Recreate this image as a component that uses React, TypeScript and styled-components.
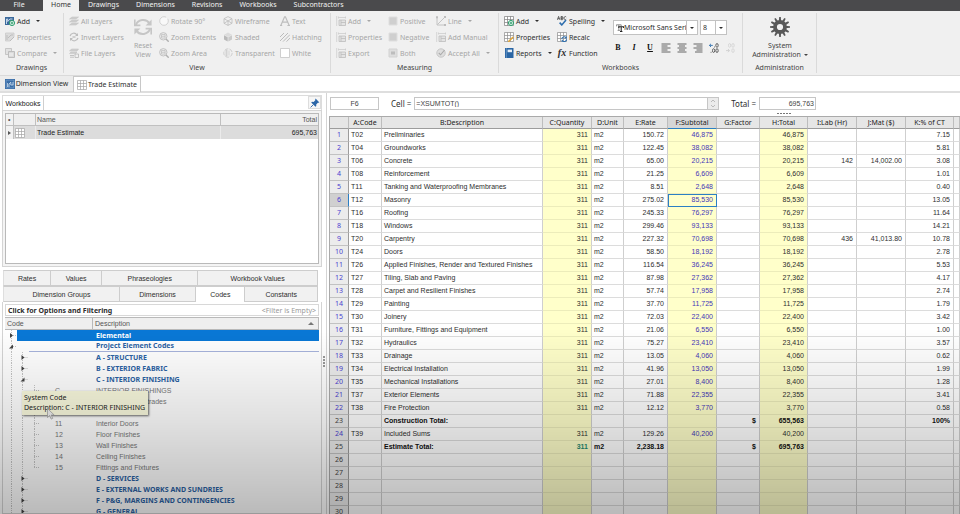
import React from "react";
import styled, { createGlobalStyle, css } from "styled-components";

const UI = `"Noto Sans", "Open Sans", sans-serif`;
const GRID = `"Liberation Sans", Arial, sans-serif`;

const Global = createGlobalStyle`
  *, *::before, *::after { box-sizing: border-box; }
  html, body, #root { height: 100%; }
  body { margin: 0; overflow: hidden; background: #fff; font: 7px/9px ${UI}; color: #2e2e2e; }
  button, input, select { font: inherit; color: inherit; margin: 0; padding: 0; border: 0; background: none; border-radius: 0; }
  table { border-collapse: separate; border-spacing: 0; }
`;

/* ---------- icons ---------- */

const G = "#bdbdbd";
const BLUE = "#2f6fae";
const GREEN = "#2f9e6e";

const grid = (c: string) => (
  <path d="M.5.5h9v9h-9zM.5 3.5h9M.5 6.5h9M3.5.5v9M6.5.5v9" fill="#fff" stroke={c} strokeWidth=".7" />
);

const drawings: Record<string, React.ReactNode> = {
  addDrawing: (
    <>
      <path d="M0 1h9v4H5v4H0z" fill="#3c6a9c" />
      <path d="M1.5 8V3h1.2v2.5L5 3h2.5" fill="none" stroke="#cfe0f0" strokeWidth=".9" />
      <circle cx="7" cy="7" r="2.6" fill="#eef7f2" stroke={GREEN} strokeWidth="1" />
      <path d="M7 5.6v2.8M5.6 7h2.8" stroke={GREEN} strokeWidth="1" />
    </>
  ),
  drawing: (
    <>
      <path d="M.5 1h8.5v4L5 9H.5z" fill="#dcdcdc" stroke="#cacaca" strokeWidth=".8" />
      <path d="M2 8V3M3 6l3-3h2M5 9l4-4" fill="none" stroke={G} />
    </>
  ),
  compare: (
    <>
      <path d="M.5.5h6v6h-6z" fill="#e2e2e2" stroke={G} strokeWidth=".8" />
      <path d="M3.5 3.5h6v6h-6z" fill="#dadada" stroke={G} />
      <path d="M5 8V5M7 8V5" stroke="#f4f4f4" />
    </>
  ),
  layers: (
    <path d="M3 1h6.5L7 3H.5zM3 4h6.5L7 6H.5zM3 7h6.5L7 9H.5z" fill="#cfcfcf" stroke={G} strokeWidth=".5" />
  ),
  invert: (
    <>
      <path d="M1 4c1-3 5-4 7-1M9 6c-1 3-5 4-7 1" fill="none" stroke={G} strokeWidth="1.2" />
      <path d="M9 1v3H6zM1 9V6h3z" fill={G} />
      <path d="M3.5 4h3v2h-3z" fill="#cfcfcf" />
    </>
  ),
  fileLayers: (
    <>
      <path d="M2.5 1h7L8 3H.5zM2 4h6L6.5 5.6H.5z" fill="#cfcfcf" stroke={G} strokeWidth=".5" />
      <path d="M1 7.5h4M1 9.2h4M6 6h3.5v3.5H6z" fill="none" stroke={G} strokeWidth=".9" />
    </>
  ),
  reset: (
    <>
      <path d="M1.4 4.2A3.8 3.6 0 0 1 8.3 3.2M8.6 5.8A3.8 3.6 0 0 1 1.7 6.8" fill="none" stroke="#c6c6c6" strokeWidth="1" />
      <path d="M9.3 1.2v3H6.3zM.7 8.8v-3h3z" fill="#c6c6c6" />
      <path d="M.9 1.2v3h2.8M9.1 8.8v-3H6.3" fill="none" stroke="#c6c6c6" strokeWidth=".8" />
    </>
  ),
  rotate: <circle cx="5" cy="5" r="4.3" fill="#f8f8f8" stroke="#c9c9c9" strokeWidth=".8" strokeDasharray="22 2" />,
  zoom: (
    <>
      <circle cx="4.3" cy="4.3" r="3.7" fill="#ececec" stroke={G} strokeWidth=".9" />
      <path d="M7 7l2.7 2.7" stroke="#b0b0b0" strokeWidth="1.4" />
      <path d="M2.5 2.5h3.6v3.6H2.5zM2.5 4.3h3.6" fill="none" stroke={G} strokeWidth=".7" />
    </>
  ),
  wire: (
    <path d="M5 .6l4 2.1v4.6L5 9.4 1 7.3V2.7zM1 2.7l4 2.2 4-2.2M5 4.9v4.5M1 7.3l4-2.4 4 2.4" fill="none" stroke={G} strokeWidth=".8" />
  ),
  shaded: (
    <>
      <path d="M5 .6l4 2.1L5 4.9 1 2.7z" fill="#dcdcdc" />
      <path d="M1 3.2l3.7 2v4.3L1 7.4z" fill="#b9b9b9" />
      <path d="M9 3.2l-3.7 2v4.3L9 7.4z" fill="#cacaca" />
    </>
  ),
  transparent: (
    <>
      <circle cx="5" cy="5" r="4.2" fill="none" stroke="#c9c9c9" strokeWidth=".9" strokeDasharray="4 1.2" />
      <path d="M3 2v6h1V2zM6 2.5v5" stroke="#cdcdcd" fill="#ddd" strokeWidth=".8" />
    </>
  ),
  letterA: <path d="M.8 9.5L4.6.8h.8l3.8 8.7M2.4 6.2h5.2M0 9.5h2.2M7.4 9.5H10" fill="none" stroke={G} strokeWidth="1.2" />,
  hatch: <path d="M0 5l4-4M0 9l8-8M3 9.6l7-7M6.5 9.6L10 6" stroke="#b6b6b6" strokeWidth=".9" />,
  white: <path d="M.5.5h9v9h-9z" fill="#fff" stroke="#c4c4c4" strokeWidth=".8" />,
  measure: (
    <>
      <path d="M.7 0v10M2.5 1.5H10M2.5.5v2M9.5.5v2" fill="none" stroke="#cdcdcd" strokeWidth=".8" />
      <path d="M3 4h6.5v5.5H3zM5 4v5.5M5 6.5h4.5" fill="#e4e4e4" stroke={G} strokeWidth=".8" />
    </>
  ),
  solid: <path d="M1 1h8v8H1z" fill="#cfcfcf" stroke="#dedede" />,
  both: (
    <>
      <path d="M1 1h8v8H1z" fill="#dedede" stroke="#d2d2d2" />
      <path d="M3 3.5h4v3H3z" fill={G} />
    </>
  ),
  line: (
    <>
      <path d="M1 1v8h8M1.5 8.5l7-7" fill="none" stroke={G} strokeWidth=".9" />
      <path d="M0 .2h2v2H0zM8 0h2v2H8zM8 8h2v2H8z" fill={G} />
    </>
  ),
  accept: (
    <>
      <circle cx="5" cy="5" r="4.2" fill="#dedede" stroke="#c6c6c6" />
      <path d="M2.8 5l1.8 1.8L8.6 2" fill="none" stroke="#aaa" strokeWidth="1.1" />
    </>
  ),
  addSheet: (
    <>
      {grid("#7d7d7d")}
      <circle cx="7" cy="7" r="2.6" fill="#eef7f2" stroke={GREEN} strokeWidth="1" />
      <path d="M7 5.6v2.8M5.6 7h2.8" stroke={GREEN} />
    </>
  ),
  propSheet: (
    <>
      {grid("#8c8c8c")}
      <path d="M4 9l4.6-4.6 1.2 1.2L5.2 10H4z" fill="#e0a63a" />
    </>
  ),
  recalc: (
    <>
      {grid("#8c8c8c")}
      <path d="M4.8 7a2.4 2.4 0 0 1 4.2-1.4M9.6 7.4a2.4 2.4 0 0 1-4.2 1.4" fill="none" stroke={BLUE} strokeWidth="1.1" />
      <path d="M9.8 4v2.4H7.4zM4.6 10V7.8h2.2z" fill={BLUE} />
    </>
  ),
  report: (
    <>
      <path d="M1 0h8.5v10H1z" fill="#2a66a5" />
      <path d="M3.6 1.6h4.4v2.6H3.6z" fill="#e6eff8" />
      <path d="M2.4 0v10" stroke="#7ea6ce" strokeWidth=".6" />
    </>
  ),
  spelling: (
    <>
      <path d="M.4 3.8L1.6.4l1.2 3.4M.9 2.7h1.5M4 .5v3.2h1.2a.8.8 0 0 0 0-1.6H4h1.1a.8.8 0 0 0 0-1.6zM9.2 1a1.3 1.6 0 1 0 0 2.2" fill="none" stroke="#333" strokeWidth=".7" />
      <path d="M2.6 6.6l2.2 2.3L9 4" fill="none" stroke={BLUE} strokeWidth="1.6" />
    </>
  ),
  pin: (
    <>
      <path d="M5.6.6l3.8 3.8-1 .4-.5-.1-1.7 1.7.1 1.7-.8.7L1.2 4.5l.8-.7 1.6.1 1.7-1.7-.1-.6z" fill="#2b66a8" />
      <path d="M3.4 6.6L.6 9.4" stroke="#2b66a8" strokeWidth=".9" />
    </>
  ),
  dimView: (
    <>
      <path d="M0 0h10v10H0z" fill="#3a6ea8" />
      <path d="M1.2 1.2h7.6v7.6H1.2z" fill="none" stroke="#8fb0d4" strokeWidth=".5" />
      <path d="M2.6 8V4M4 8V5l1.8-1.8V6H8V3" fill="none" stroke="#d5e4f3" strokeWidth=".8" />
    </>
  ),
  sheet: grid("#a4a4a4"),
  tt: (
    <>
      <path d="M.5 3V1h6v2M3.5 1v7M2 8h3" fill="none" stroke="#777" strokeWidth="1" />
      <path d="M3.5 5V3.5h6V5M6.5 3.5v6M5 9.5h3" fill="none" stroke="#222" strokeWidth="1.3" />
    </>
  ),
  alignLeft: <path d="M.5 1h9M.5 3h6M.5 5h9M.5 7h6M.5 9h9" stroke="#555" strokeWidth=".9" />,
  alignCenter: <path d="M.5 1h9M2 3h6M.5 5h9M2 7h6M.5 9h9" stroke="#555" strokeWidth=".9" />,
  alignRight: <path d="M.5 1h9M3.5 3h6M.5 5h9M3.5 7h6M2 9h7.5" stroke="#555" strokeWidth=".9" />,
  decInc: (
    <>
      <path d="M.4 2.4h3.4M2 .8L.4 2.4 2 4" fill="none" stroke={BLUE} strokeWidth=".9" />
      <path d="M5 4h.8" stroke="#444" strokeWidth=".9" />
      <g fill="none" stroke="#444" strokeWidth=".8">
        <ellipse cx="8" cy="2.4" rx="1.2" ry="1.9" />
        <ellipse cx="4.6" cy="7.6" rx="1.1" ry="1.9" />
        <ellipse cx="8" cy="7.6" rx="1.2" ry="1.9" />
        <path d="M1.6 9.3h.9" />
      </g>
    </>
  ),
  decDec: (
    <>
      <path d="M1 7.6h3.4M3 6l1.4 1.6L3 9.2" fill="none" stroke="#cfcfcf" strokeWidth=".9" />
      <g fill="none" stroke="#d2d2d2" strokeWidth=".8">
        <ellipse cx="4.6" cy="2.4" rx="1.1" ry="1.9" />
        <ellipse cx="8" cy="2.4" rx="1.2" ry="1.9" />
        <ellipse cx="8" cy="7.6" rx="1.2" ry="1.9" />
      </g>
    </>
  ),
  gear: (
    <>
      {Array.from({ length: 12 }, (_, i) => (
        <path key={i} d="M4.4 2.4L4.6 0h.8l.2 2.4z" fill="#585858" transform={`rotate(${i * 30} 5 5)`} />
      ))}
      <circle cx="5" cy="5" r="2.5" fill="#f0f0f0" stroke="#585858" strokeWidth="1.9" />
    </>
  ),
};

const Svg = styled.svg<{ $size?: number }>`
  width: ${(p) => p.$size ?? 10}px;
  height: ${(p) => p.$size ?? 10}px;
  flex: none;
  display: block;
`;
const Icon = ({ name, size }: { name: string; size?: number }) => (
  <Svg $size={size} viewBox="0 0 10 10" aria-hidden="true">{drawings[name]}</Svg>
);

const Caret = styled.i`
  flex: none;
  border: 2px solid transparent;
  border-top-color: currentColor;
  border-bottom: 0;
`;

/* ---------- shell ---------- */

const Page = styled.div`
  height: 100vh;
  display: flex;
  flex-direction: column;
  overflow: hidden;
`;

const Shade = styled.div`
  position: fixed;
  inset: auto 0 0 0;
  height: 36vh;
  pointer-events: none;
  background: linear-gradient(rgba(0, 0, 0, 0), rgba(0, 0, 0, 0.12) 50%, rgba(0, 0, 0, 0.27));
`;

const Menu = styled.nav`
  flex: none;
  height: 11px;
  display: flex;
  gap: 1px;
  background: #4a4a4c;
`;
const MenuItem = styled.button<{ $active?: boolean; $file?: boolean }>`
  padding: 0 8px 2px;
  line-height: 9px;
  color: #f2f2f2;
  ${(p) => p.$file && css`width: 42px; padding-right: 12px;`}
  ${(p) => p.$active && css`background: #f0f0f0; color: #333;`}
`;

/* ---------- ribbon ---------- */

const Ribbon = styled.div`
  flex: none;
  height: 65px;
  display: flex;
  background: #f0f0f0;
  border-bottom: 1px solid #dadada;
  padding: 2px 0;
`;
const Group = styled.section<{ $w: number }>`
  width: ${(p) => p.$w}px;
  flex: none;
  display: flex;
  flex-direction: column;
  border-right: 1px solid #dadada;
`;
const GroupBody = styled.div`
  flex: 1;
  display: flex;
  padding-left: 5px;
`;
const GroupLabel = styled.h2`
  margin: 0;
  font-size: 7px;
  font-weight: 400;
  line-height: 10px;
  text-align: center;
  color: #444;
`;
const Col = styled.div<{ $w: number }>`
  width: ${(p) => p.$w}px;
  flex: none;
  display: flex;
  flex-direction: column;
`;
const Tool = styled.button<{ $off?: boolean }>`
  height: 16px;
  display: flex;
  align-items: center;
  gap: 2px;
  white-space: nowrap;
  color: ${(p) => (p.$off ? "#a6a6a6" : "#2e2e2e")};
  ${Caret} { margin-left: 4px; }
`;
const BigTool = styled.button<{ $off?: boolean; $w: number }>`
  width: ${(p) => p.$w}px;
  flex: none;
  display: flex;
  flex-direction: column;
  align-items: center;
  padding-top: 4px;
  white-space: nowrap;
  color: ${(p) => (p.$off ? "#a6a6a6" : "#444")};
  ${Svg} { margin-bottom: 4px; }
`;
const Inline = styled.span`
  display: flex;
  align-items: center;
  gap: 3px;
`;
const Fx = styled.i`
  width: 10px;
  font: italic bold 10px/10px "Liberation Serif", serif;
`;
const FontPane = styled.div`
  display: flex;
  flex-direction: column;
  padding-top: 7px;
  gap: 7px;
`;
const Line = styled.div`
  display: flex;
  align-items: center;
  gap: 2px;
`;
const Picker = styled.label<{ $w: number }>`
  width: ${(p) => p.$w}px;
  height: 15px;
  display: flex;
  align-items: center;
  background: #fff;
  border: 1px solid #c2c2c2;
  padding-left: 2px;
  select {
    flex: 1;
    min-width: 0;
    height: 13px;
    appearance: none;
    outline: 0;
  }
`;
const Drop = styled.span`
  width: 11px;
  align-self: stretch;
  display: flex;
  align-items: center;
  justify-content: center;
  border-left: 1px solid #c2c2c2;
`;
const Format = styled.button`
  width: 16px;
  height: 12px;
  display: flex;
  align-items: center;
  justify-content: center;
  font: bold 8px/12px "Liberation Serif", serif;
  color: #111;
  &.i { font-style: italic; }
  &.u { text-decoration: underline; }
`;
const FormatLine = styled.div`
  display: flex;
  margin-left: -3px;
`;

type ToolDef = [icon: string, label: string, drop?: boolean];
const Tools = ({ w, items, off }: { w: number; items: ToolDef[]; off?: boolean }) => (
  <Col $w={w}>
    {items.map(([icon, label, drop]) => (
      <Tool key={label} $off={off || icon === "drawing" || icon === "compare"}>
        {icon === "fx" ? <Fx>fx</Fx> : <Icon name={icon} />}
        {label}
        {drop && <Caret />}
      </Tool>
    ))}
  </Col>
);

const RibbonBar = () => (
  <Ribbon>
    <Group $w={64}>
      <GroupBody>
        <Tools w={58} items={[["addDrawing", "Add", true], ["drawing", "Properties"], ["compare", "Compare", true]]} />
      </GroupBody>
      <GroupLabel>Drawings</GroupLabel>
    </Group>
    <Group $w={267}>
      <GroupBody>
        <Tools off w={58} items={[["layers", "All Layers"], ["invert", "Invert Layers"], ["fileLayers", "File Layers"]]} />
        <BigTool $off $w={32}><Icon name="reset" size={20} /><span>Reset</span><span>View</span></BigTool>
        <Tools off w={64} items={[["rotate", "Rotate 90°"], ["zoom", "Zoom Extents"], ["zoom", "Zoom Area"]]} />
        <Tools off w={57} items={[["wire", "Wireframe"], ["shaded", "Shaded"], ["transparent", "Transparent"]]} />
        <Tools off w={48} items={[["letterA", "Text"], ["hatch", "Hatching"], ["white", "White"]]} />
      </GroupBody>
      <GroupLabel>View</GroupLabel>
    </Group>
    <Group $w={168}>
      <GroupBody>
        <Tools off w={52} items={[["measure", "Add", true], ["measure", "Properties"], ["measure", "Export"]]} />
        <Tools off w={48} items={[["solid", "Positive"], ["solid", "Negative"], ["both", "Both"]]} />
        <Tools off w={60} items={[["line", "Line", true], ["measure", "Add Manual"], ["accept", "Accept All", true]]} />
      </GroupBody>
      <GroupLabel>Measuring</GroupLabel>
    </Group>
    <Group $w={244}>
      <GroupBody>
        <Tools w={53} items={[["addSheet", "Add", true], ["propSheet", "Properties"], ["report", "Reports", true]]} />
        <Tools w={56} items={[["spelling", "Spelling", true], ["recalc", "Recalc"], ["fx", "Function"]]} />
        <FontPane>
          <Line>
            <Picker $w={85}>
              <Icon name="tt" size={8} />
              <select aria-label="Font"><option>Microsoft Sans Serif</option></select>
              <Drop><Caret /></Drop>
            </Picker>
            <Picker $w={27}>
              <select aria-label="Font size"><option>8</option></select>
              <Drop><Caret /></Drop>
            </Picker>
          </Line>
          <FormatLine>
            <Format>B</Format>
            <Format className="i">I</Format>
            <Format className="u">U</Format>
            <Format aria-label="Align left"><Icon name="alignLeft" /></Format>
            <Format aria-label="Align center"><Icon name="alignCenter" /></Format>
            <Format aria-label="Align right"><Icon name="alignRight" /></Format>
            <Format aria-label="Increase decimals"><Icon name="decInc" /></Format>
            <Format aria-label="Decrease decimals"><Icon name="decDec" /></Format>
          </FormatLine>
        </FontPane>
      </GroupBody>
      <GroupLabel>Workbooks</GroupLabel>
    </Group>
    <Group $w={74}>
      <GroupBody>
        <BigTool $w={64}>
          <Icon name="gear" size={20} />
          <span>System</span>
          <Inline>Administration <Caret /></Inline>
        </BigTool>
      </GroupBody>
      <GroupLabel>Administration</GroupLabel>
    </Group>
  </Ribbon>
);

/* ---------- document tabs ---------- */

const DocTabs = styled.div`
  flex: none;
  height: 17px;
  display: flex;
  align-items: flex-end;
  border-bottom: 2px solid #dedede;
`;
const DocTab = styled.button<{ $active?: boolean; $w: number }>`
  width: ${(p) => p.$w}px;
  height: 15px;
  display: flex;
  align-items: center;
  justify-content: center;
  gap: 1px;
  white-space: nowrap;
  background: #ececec;
  ${(p) => p.$active && css`
    height: 16px;
    background: #fff;
    border: 1px solid #c8c8c8;
    border-bottom: 0;
    margin-bottom: -1px;
  `}
`;

/* ---------- left side ---------- */

const Main = styled.main`
  flex: 1;
  min-height: 0;
  display: flex;
`;
const Left = styled.aside`
  width: 322px;
  flex: none;
  display: flex;
  flex-direction: column;
  padding: 2px 0 0 2px;
  font: 7px/9px ${GRID};
`;
const PaneHead = styled.div`
  height: 15px;
  flex: none;
  display: flex;
  justify-content: space-between;
  border: 1px solid #dcdcdc;
  border-bottom: 0;
`;
const PaneTab = styled.h1`
  margin: 0;
  width: 41px;
  font: 7px/15px ${GRID};
  text-align: center;
  border-right: 1px solid #cfcfcf;
  color: #222;
`;
const Pin = styled.button`
  width: 13px;
  height: 13px;
  display: flex;
  align-items: center;
  justify-content: center;
  background: #f6f6f6;
  border: 1px solid #ddd;
`;
const PaneBox = styled.div`
  height: 157px;
  flex: none;
  padding: 2px;
  border: 1px solid #d4d4d4;
  background: #f4f4f4;
  margin-bottom: 3px;
`;
const BookFrame = styled.div`
  height: 100%;
  border: 1px solid #b9b9b9;
  background: #fff;
`;
const BookTable = styled.table`
  width: 100%;
  table-layout: fixed;
  th, td { padding: 0 1px; height: 12px; text-align: left; font-weight: 400; border-right: 1px solid #c0c0c0; }
  th { background: #efefef; border-bottom: 1px solid #c0c0c0; color: #555; }
  td { height: 13px; background: #dcdcdc; border-right-color: #ebebeb; color: #222; }
  tr > :last-child { text-align: right; border-right: 0; }
  tr > :first-child { padding: 0 2px; border-right: 1px solid #c0c0c0; background: #f2f2f2; }
`;
const ArrowRight = styled.i`
  display: block;
  width: 0;
  border: 2px solid transparent;
  border-left: 3px solid #555;
  border-right: 0;
`;
const TabRow = styled.div`
  flex: none;
  display: flex;
  margin: 0 4px 0 1px;
`;
const Tab = styled.button<{ $active?: boolean; $w: number }>`
  flex: ${(p) => p.$w} 1 0;
  height: 16px;
  background: ${(p) => (p.$active ? "#fff" : "#f1f1f1")};
  border: 1px solid #cdcdcd;
  border-left: 0;
  border-bottom: ${(p) => (p.$active ? "0" : "1px solid #cdcdcd")};
  white-space: nowrap;
  &:first-child { border-left: 1px solid #dedede; }
`;
const CodePane = styled.div`
  flex: 1;
  min-height: 0;
  overflow: hidden;
  border: 1px solid #d4d4d4;
  border-top: 0;
  padding: 2px 2px 0;
`;
const Filter = styled.button`
  width: 100%;
  height: 12px;
  margin-bottom: 1px;
  display: flex;
  align-items: center;
  justify-content: space-between;
  padding: 0 2px;
  border: 1px solid #d8d8d8;
  font: bold 7px/9px ${UI};
  span { font-weight: 400; color: #999; }
`;
const TreeTable = styled.table`
  width: 100%;
  table-layout: fixed;
  th {
    height: 13px;
    padding: 0 2px;
    text-align: left;
    font-weight: 400;
    color: #555;
    background: #efefef;
    border: 1px solid #b9b9b9;
    border-left-width: 0;
  }
  th > div { display: flex; justify-content: space-between; align-items: center; }
  td { height: 11px; padding: 0; line-height: 11px; white-space: nowrap; color: #777; }
  td + td { padding-left: 3px; }
`;
const SortUp = styled.i`
  border: 3px solid transparent;
  border-bottom-color: #777;
  border-top: 0;
  margin-right: 2px;
`;
const CodeCell = styled.div`
  display: flex;
  align-items: center;
  height: 11px;
`;
const Branches = styled.svg<{ $w: number }>`
  width: ${(p) => p.$w}px;
  height: 11px;
  flex: none;
`;
const Fill = styled.span<{ $kind?: "selected" | "group" }>`
  flex: 1;
  height: 11px;
  ${(p) => p.$kind === "selected" && css`background: #0a78d6;`}
  ${(p) => p.$kind === "group" && css`margin-left: 12px; border-bottom: 1px solid #a8b4dc;`}
`;
const TreeRow = styled.tr<{ $kind?: "selected" | "group"; $bold?: boolean }>`
  ${(p) => p.$bold && css`td { font-family: ${UI}; font-weight: 700; color: #2b62a4; }`}
  ${(p) => p.$kind === "selected" && css`td + td { background: #0a78d6; color: #fff; }`}
  ${(p) => p.$kind === "group" && css`td + td { border-bottom: 1px solid #a8b4dc; line-height: 10px; }`}
`;

type Node = { level: 0 | 1 | 2; code?: string; text: string; open?: boolean; last?: boolean; kind?: "selected" | "group" };
const nodes: Node[] = [
  { level: 0, text: "Elemental", kind: "selected" },
  { level: 0, text: "Project Element Codes", open: true, kind: "group" },
  { level: 1, text: "A - STRUCTURE" },
  { level: 1, text: "B - EXTERIOR FABRIC" },
  { level: 1, text: "C - INTERIOR FINISHING", open: true },
  { level: 2, code: "C", text: "INTERIOR FINISHINGS" },
  { level: 2, code: "09", text: "Stairs and Balustrades" },
  { level: 2, code: "10", text: "Interior Walls" },
  { level: 2, code: "11", text: "Interior Doors" },
  { level: 2, code: "12", text: "Floor Finishes" },
  { level: 2, code: "13", text: "Wall Finishes" },
  { level: 2, code: "14", text: "Ceiling Finishes" },
  { level: 2, code: "15", text: "Fittings and Fixtures", last: true },
  { level: 1, text: "D - SERVICES" },
  { level: 1, text: "E - EXTERNAL WORKS AND SUNDRIES" },
  { level: 1, text: "F - P&G, MARGINS AND CONTINGENCIES" },
  { level: 1, text: "G - GENERAL" },
];

const Guide = ({ node }: { node: Node }) => {
  const x = 6 + node.level * 11.5;
  const w = [12, 30, 50][node.level];
  return (
    <Branches $w={w} viewBox={`0 0 ${w} 11`} aria-hidden="true">
      <g fill="none" stroke="#c4c4c4" strokeDasharray="1 1">
        <path d="M6.5 0v11" />
        {node.level > 0 && <path d="M17.5 0v11" />}
        {node.level === 2 && <path d={node.last ? "M29.5 0v5" : "M29.5 0v11"} />}
        <path d={`M${x} 5.5h6`} />
      </g>
      {node.level < 2 &&
        (node.open ? (
          <path d={`M${x + 2} 3.5v4h-4z`} fill="#444" />
        ) : (
          <path d={`M${x - 1} 3l3 2.5-3 2.5z`} fill="#444" />
        ))}
    </Branches>
  );
};

const TreeWrap = styled.div`
  position: relative;
`;
const Tip = styled.div`
  position: absolute;
  left: 17px;
  top: 74px;
  height: 24px;
  padding: 2px 3px 0 2px;
  font: 7px/10px ${UI};
  white-space: nowrap;
  color: #222;
  background: #fafade;
  box-shadow: 1px 1px 2px rgba(0, 0, 0, 0.6);
`;
const Pointer = styled.svg`
  position: absolute;
  left: 25px;
  top: 17px;
  width: 8px;
  height: 12px;
`;

const LeftSide = () => (
  <Left>
    <PaneHead>
      <PaneTab>Workbooks</PaneTab>
      <Pin aria-label="Pin"><Icon name="pin" /></Pin>
    </PaneHead>
    <PaneBox>
      <BookFrame>
        <BookTable>
          <colgroup><col width={8} /><col width={22} /><col /><col width={97} /></colgroup>
          <thead><tr><th>•</th><th /><th>Name</th><th>Total</th></tr></thead>
          <tbody>
            <tr><td><ArrowRight /></td><td><Icon name="sheet" /></td><td>Trade Estimate</td><td>695,763</td></tr>
          </tbody>
        </BookTable>
      </BookFrame>
    </PaneBox>
    <TabRow>
      <Tab $w={47}>Rates</Tab><Tab $w={51}>Values</Tab><Tab $w={97}>Phraseologies</Tab><Tab $w={121}>Workbook Values</Tab>
    </TabRow>
    <TabRow>
      <Tab $w={117}>Dimension Groups</Tab><Tab $w={77}>Dimensions</Tab><Tab $w={49} $active>Codes</Tab><Tab $w={73}>Constants</Tab>
    </TabRow>
    <CodePane>
      <Filter>Click for Options and Filtering<span>&lt;Filter is Empty&gt;</span></Filter>
      <TreeWrap>
        <TreeTable>
          <colgroup><col width={88} /><col /></colgroup>
          <thead><tr><th>Code</th><th><div>Description<SortUp /></div></th></tr></thead>
          <tbody>
            {nodes.map((n) => (
              <TreeRow key={n.text} $kind={n.kind} $bold={n.level < 2}>
                <td><CodeCell><Guide node={n} />{n.code ?? <Fill $kind={n.kind} />}</CodeCell></td>
                <td>{n.text}</td>
              </TreeRow>
            ))}
          </tbody>
        </TreeTable>
        <Tip role="tooltip">
          System Code<br />Description: C - INTERIOR FINISHING
          <Pointer viewBox="0 0 8 12" aria-hidden="true">
            <path d="M.5.5v9l2.2-2 1.5 3.6 1.5-.7-1.5-3.4h3z" fill="#eee" stroke="#999" strokeWidth=".7" />
          </Pointer>
        </Tip>
      </TreeWrap>
    </CodePane>
  </Left>
);

/* ---------- right side ---------- */

const Splitter = styled.div`
  width: 5px;
  flex: none;
  display: flex;
  flex-direction: column;
  align-items: center;
  justify-content: center;
  gap: 1px;
  padding-top: 116px;
  border-right: 1px solid #d4d4d4;
  i { width: 2px; height: 2px; background: #999; }
`;
const Right = styled.section`
  flex: 1;
  min-width: 0;
  display: flex;
  flex-direction: column;
  padding: 1px 0 0 2px;
  overflow: hidden;
`;
const CellBar = styled.div`
  flex: none;
  height: 19px;
  display: flex;
  align-items: center;
  padding: 0 144px 0 1px;
  label { margin: 0 3px 0 12px; white-space: nowrap; font-size: 8px; }
`;
const Box = styled.input<{ $w?: number; $align?: string }>`
  ${(p) => (p.$w ? css`width: ${p.$w}px; flex: none;` : css`flex: 1; min-width: 0;`)}
  height: 13px;
  border: 1px solid #c6c6c6;
  padding: 0 1px;
  background: #fff;
  color: #444;
  font: 7px/11px ${GRID};
  text-align: ${(p) => p.$align ?? "left"};
`;
const Spin = styled.button`
  width: 11px;
  height: 13px;
  flex: none;
  display: flex;
  background: #ececec;
  border: 1px solid #c6c6c6;
  border-left: 0;
  svg { width: 10px; height: 11px; }
`;
const Dots = styled.div`
  flex: none;
  height: 3px;
  display: flex;
  gap: 1px;
  padding: 0 0 0 448px;
  i { width: 2px; height: 1px; background: #777; }
`;
const Sheet = styled.table`
  width: 100%;
  flex: none;
  table-layout: fixed;
  border-top: 1px solid #aaa;
  border-left: 1px solid #aaa;
  font: 7px/12px ${GRID};
  th, td {
    height: 13px;
    padding: 0 3px 0 2px;
    border-right: 1px solid #cfcfcf;
    border-bottom: 1px solid #dcdcdc;
    white-space: nowrap;
    overflow: hidden;
    text-align: right;
  }
  thead th {
    height: 12px;
    background: #e6e6e6;
    border-right-color: #bdbdbd;
    border-bottom-color: #9c9c9c;
    padding: 0;
    text-align: center;
    font: 7px/11px ${UI};
    color: #222;
  }
  thead th.on { background: #d6d6d6; border-bottom-color: #2b7fc4; }
`;
const RowHead = styled.th<{ $blue?: boolean; $on?: boolean }>`
  && {
    text-align: center;
    padding: 0;
    font: 7px/12px ${UI};
    color: ${(p) => (p.$blue ? "#4a3fd0" : "#444")};
    background: ${(p) => (p.$on ? "#d0d0d0" : "#ececec")};
    border-right-color: ${(p) => (p.$on ? "#2b7fc4" : "#9c9c9c")};
    border-bottom-color: #c2c2c2;
  }
`;
const Cell = styled.td<{ $kind?: string; $bold?: boolean; $on?: boolean }>`
  && {
    ${(p) => p.$kind === "text" && css`text-align: left;`}
    ${(p) => (p.$kind === "yellow" || p.$kind === "sub") && css`background: #ffffca; border-bottom-color: #ececba;`}
    ${(p) => p.$kind === "sub" && css`color: #4436b8;`}
    ${(p) => p.$bold && css`font-weight: 700; color: #111;`}
    ${(p) => p.$on && css`outline: 1px solid #2b7fc4; outline-offset: -1px;`}
  }
`;
const Green = styled.span`
  color: #1f8a70;
`;

const heads = ["A:Code", "B:Description", "C:Quantity", "D:Unit", "E:Rate", "F:Subtotal", "G:Factor", "H:Total", "I:Lab (Hr)", "J:Mat ($)", "K:% of CT", ""];
const widths = [19, 33, 161, 49, 32, 44, 49, 43, 48, 49, 49, 48];
const kinds = ["text", "text", "yellow", "text", "", "sub", "", "yellow", "", "", "", ""];

const data: [string, string, string, string, string, string?, string?][] = [
  ["T02", "Preliminaries", "150.72", "46,875", "7.15"],
  ["T04", "Groundworks", "122.45", "38,082", "5.81"],
  ["T06", "Concrete", "65.00", "20,215", "3.08", "142", "14,002.00"],
  ["T08", "Reinforcement", "21.25", "6,609", "1.01"],
  ["T11", "Tanking and Waterproofing Membranes", "8.51", "2,648", "0.40"],
  ["T12", "Masonry", "275.02", "85,530", "13.05"],
  ["T16", "Roofing", "245.33", "76,297", "11.64"],
  ["T18", "Windows", "299.46", "93,133", "14.21"],
  ["T20", "Carpentry", "227.32", "70,698", "10.78", "436", "41,013.80"],
  ["T24", "Doors", "58.50", "18,192", "2.78"],
  ["T26", "Applied Finishes, Render and Textured Finishes", "116.54", "36,245", "5.53"],
  ["T27", "Tiling, Slab and Paving", "87.98", "27,362", "4.17"],
  ["T28", "Carpet and Resilient Finishes", "57.74", "17,958", "2.74"],
  ["T29", "Painting", "37.70", "11,725", "1.79"],
  ["T30", "Joinery", "72.03", "22,400", "3.42"],
  ["T31", "Furniture, Fittings and Equipment", "21.06", "6,550", "1.00"],
  ["T32", "Hydraulics", "75.27", "23,410", "3.57"],
  ["T33", "Drainage", "13.05", "4,060", "0.62"],
  ["T34", "Electrical Installation", "41.96", "13,050", "1.99"],
  ["T35", "Mechanical Installations", "27.01", "8,400", "1.28"],
  ["T37", "Exterior Elements", "71.88", "22,355", "3.41"],
  ["T38", "Fire Protection", "12.12", "3,770", "0.58"],
];

type SheetRow = { cells: React.ReactNode[]; bold?: boolean; blue?: boolean };
const rows: SheetRow[] = [
  ...data.map(([code, name, rate, total, pct, lab, mat]): SheetRow => ({
    blue: true,
    cells: [code, name, "311", "m2", rate, total, "", total, lab, mat, pct, ""],
  })),
  { bold: true, cells: ["", "Construction Total:", "", "", "", "", "$", "655,563", "", "", "100%", ""] },
  { blue: true, cells: ["T39", "Included Sums", "311", "m2", "129.26", "40,200", "", "40,200", "", "", "", ""] },
  { bold: true, cells: ["", "Estimate Total:", <Green key="q">311</Green>, "m2", "2,238.18", "", "$", "695,763", "", "", "", ""] },
  ...Array.from({ length: 5 }, (): SheetRow => ({ cells: heads.map(() => "") })),
];

const RightSide = () => (
  <Right>
    <CellBar>
      <Box aria-label="Cell reference" $w={49} $align="center" defaultValue="F6" />
      <label htmlFor="formula">Cell =</label>
      <Box id="formula" defaultValue="=XSUMTOT()" />
      <Spin aria-label="Expand formula">
        <svg viewBox="0 0 10 11" aria-hidden="true">
          <path d="M3 4l2-2 2 2M3 7l2 2 2-2" fill="none" stroke="#bbb" />
        </svg>
      </Spin>
      <label htmlFor="total">Total =</label>
      <Box id="total" $w={57} $align="right" readOnly value="695,763" />
    </CellBar>
    <Dots>{[0, 1, 2, 3, 4].map((i) => <i key={i} />)}</Dots>
    <Sheet>
      <colgroup>{widths.map((w, i) => <col key={i} width={w} />)}<col /></colgroup>
      <thead>
        <tr><th />{heads.map((h) => <th key={h} className={h === "F:Subtotal" ? "on" : undefined}>{h}</th>)}</tr>
      </thead>
      <tbody>
        {rows.map((r, i) => (
          <tr key={i}>
            <RowHead $blue={r.blue} $on={i === 5}>{i + 1}</RowHead>
            {r.cells.map((c, j) => (
              <Cell key={j} $kind={kinds[j]} $bold={r.bold} $on={i === 5 && j === 5}>{c}</Cell>
            ))}
          </tr>
        ))}
      </tbody>
    </Sheet>
  </Right>
);

export default function App() {
  return (
    <Page>
      <Global />
      <Menu>
        <MenuItem $file>File</MenuItem>
        <MenuItem $active>Home</MenuItem>
        {["Drawings", "Dimensions", "Revisions", "Workbooks", "Subcontractors"].map((m) => (
          <MenuItem key={m}>{m}</MenuItem>
        ))}
      </Menu>
      <RibbonBar />
      <DocTabs>
        <DocTab $w={73}><Icon name="dimView" />Dimension View</DocTab>
        <DocTab $w={68} $active><Icon name="sheet" />Trade Estimate</DocTab>
      </DocTabs>
      <Main>
        <LeftSide />
        <Splitter>{[0, 1, 2, 3].map((i) => <i key={i} />)}</Splitter>
        <RightSide />
      </Main>
      <Shade />
    </Page>
  );
}
